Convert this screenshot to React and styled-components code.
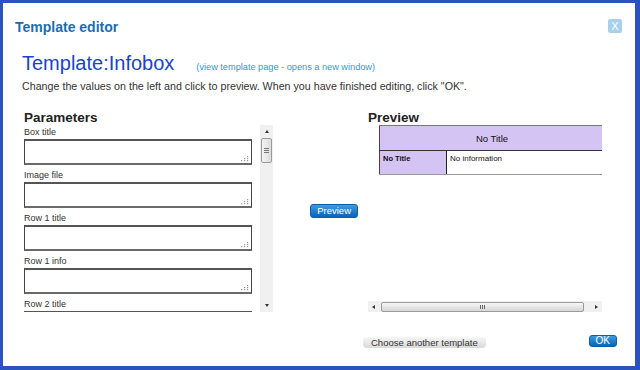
import styled, { createGlobalStyle } from 'styled-components';

const GlobalStyle = createGlobalStyle`
    html, body {
        margin: 0;
        padding: 0;
        background: #fff;
    }
    body {
        font-family: "Liberation Sans", Arial, sans-serif;
    }
`;

const Dialog = styled.div`
    box-sizing: border-box;
    width: 640px;
    height: 370px;
    border-style: solid;
    border-color: #2b53c0;
    border-width: 3px 5px 4px 3px;
    background: #fff;
    display: flex;
    flex-direction: column;
    overflow: hidden;
`;

const Header = styled.div`
    display: flex;
    justify-content: space-between;
    align-items: flex-start;
    padding: 16px 13px 0 12px;
`;

const Title = styled.h1`
    margin: 0;
    font-size: 14px;
    line-height: 17px;
    font-weight: bold;
    color: #1b6cb0;
`;

const CloseButton = styled.button`
    width: 14px;
    height: 14px;
    padding: 0;
    border: none;
    border-radius: 2px;
    background: #a9d0ea;
    color: #fff;
    font-family: "Liberation Sans", Arial, sans-serif;
    font-size: 11px;
    line-height: 14px;
    text-align: center;
`;

const Content = styled.div`
    padding-left: 19px;
    display: flex;
    flex-direction: column;
`;

const TemplateLine = styled.div`
    margin-top: 14px;
    display: flex;
    align-items: baseline;
    line-height: 27px;
`;

const TemplateName = styled.span`
    font-size: 20px;
    color: #1a44c8;
`;

const TemplateLink = styled.a`
    margin-left: 22px;
    font-size: 9.2px;
    color: #3297d6;
    text-decoration: none;
`;

const Hint = styled.p`
    margin: -1px 0 0;
    font-size: 10.7px;
    line-height: 13px;
    color: #333;
`;

const Main = styled.div`
    margin-top: 17px;
    padding-left: 2px;
    display: grid;
    grid-template-columns: 249px 95px 234px;
`;

const Column = styled.div`
    display: flex;
    flex-direction: column;
`;

const Heading = styled.h2`
    margin: 0;
    font-size: 13.5px;
    line-height: 15px;
    font-weight: bold;
    color: #222;
`;

const ParamBox = styled.div`
    display: flex;
    height: 187px;
`;

const ParamList = styled.div`
    width: 236px;
    padding-top: 2px;
    overflow: hidden;
`;

const Field = styled.div`
    margin-bottom: 5px;
`;

const Label = styled.label`
    display: block;
    margin-bottom: 1px;
    font-size: 9px;
    line-height: 11px;
    color: #333;
`;

const InputWrap = styled.div`
    position: relative;
    width: 228px;
    height: 26px;
`;

const TextArea = styled.textarea`
    box-sizing: border-box;
    display: block;
    width: 228px;
    height: 26px;
    margin: 0;
    padding: 2px;
    resize: none;
    border: 1px solid #444;
    border-top: 2px solid #555;
    border-bottom: 2px solid #6a6a6a;
    background: #fff;
    font-family: "Liberation Sans", Arial, sans-serif;
    font-size: 10px;
`;

const Grip = styled.svg`
    position: absolute;
    right: 3px;
    bottom: 3px;
    width: 8px;
    height: 7px;
`;

const ResizeGrip = () => (
    <Grip viewBox="0 0 8 7">
        {[
            [6, 1],
            [3, 3],
            [6, 3],
            [0, 5],
            [3, 5],
            [6, 5],
        ].map(([x, y]) => (
            <rect key={`${x}-${y}`} x={x} y={y} width="1.2" height="1.2" fill="#999" />
        ))}
    </Grip>
);

const VScroll = styled.div`
    width: 13px;
    background: #f0f0f0;
    display: flex;
    flex-direction: column;
    align-items: center;
`;

const Arrow = styled.span`
    width: 0;
    height: 0;
    margin: ${(p) => p.$margin};
    border-left: 2.5px solid transparent;
    border-right: 2.5px solid transparent;
    ${(p) => (p.$down ? 'border-top: 3px solid #333;' : 'border-bottom: 3px solid #333;')}
`;

const VThumb = styled.span`
    box-sizing: border-box;
    width: 11px;
    height: 25px;
    margin-top: 5px;
    border: 1px solid #9a9a9a;
    border-radius: 2px;
    background: linear-gradient(to right, #f4f4f4, #dcdcdc);
    display: flex;
    flex-direction: column;
    align-items: center;
    justify-content: center;
    gap: 1px;

    i {
        display: block;
        width: 5px;
        height: 1px;
        background: #777;
    }
`;

const Spacer = styled.span`
    flex: 1;
`;

const Middle = styled.div`
    display: flex;
    align-items: center;
    justify-content: flex-end;
    padding-right: 10px;
`;

const BlueButton = styled.button`
    box-sizing: border-box;
    height: ${(p) => p.$h || 14}px;
    padding: 0 ${(p) => p.$px || 6}px;
    border: 1px solid #0d5ea8;
    border-radius: 3px;
    background: linear-gradient(#3d9be0, #0a63b8);
    color: #fff;
    font-family: "Liberation Sans", Arial, sans-serif;
    font-size: ${(p) => p.$fs || 9.5}px;
    line-height: 1;
`;

const PreviewBox = styled.div`
    height: 187px;
    display: flex;
    flex-direction: column;
`;

const PreviewFrame = styled.div`
    flex: 1;
    overflow: hidden;
    padding-left: 11px;
`;

const Infobox = styled.table`
    width: 226px;
    border-collapse: collapse;
    font-family: "Liberation Sans", Arial, sans-serif;
    color: #111;
`;

const HeadCell = styled.th`
    height: 24px;
    padding: 0;
    background: #d4c4f4;
    border: 1px solid #777;
    border-bottom: 1px solid #333;
    border-left: 1px solid #444;
    font-size: 9.5px;
    font-weight: normal;
    text-align: center;
`;

const Cell = styled.td`
    box-sizing: border-box;
    height: 24px;
    padding: 3px 3px 0;
    vertical-align: top;
    font-size: ${(p) => (p.$head ? 7.5 : 8)}px;
    line-height: 10px;
    font-weight: ${(p) => (p.$head ? 'bold' : 'normal')};
    background: ${(p) => (p.$head ? '#d4c4f4' : '#fff')};
    width: ${(p) => (p.$head ? '67px' : 'auto')};
    border-bottom: 1px solid #999;
    border-left: 1px solid ${(p) => (p.$head ? '#444' : '#222')};
`;

const HScroll = styled.div`
    height: 11px;
    background: #f0f0f0;
    display: flex;
    align-items: center;
    padding: 0 4px;
`;

const HArrow = styled.span`
    width: 0;
    height: 0;
    border-top: 2.5px solid transparent;
    border-bottom: 2.5px solid transparent;
    ${(p) => (p.$right ? 'border-left: 3px solid #333;' : 'border-right: 3px solid #333;')}
`;

const HThumb = styled.span`
    box-sizing: border-box;
    flex: 1;
    height: 10px;
    margin: 0 11px 0 6px;
    border: 1px solid #9a9a9a;
    border-radius: 2px;
    background: linear-gradient(#f6f6f6, #d6d6d6);
    display: flex;
    justify-content: center;
    align-items: center;
    gap: 1px;

    i {
        display: block;
        width: 1px;
        height: 4px;
        background: #666;
    }
`;

const Footer = styled.div`
    margin-top: 23px;
    padding: 0 18px 0 341px;
    display: flex;
    justify-content: space-between;
    align-items: flex-start;
`;

const GrayButton = styled.button`
    box-sizing: border-box;
    height: 11px;
    margin-top: 2px;
    padding: 0 8px;
    border: none;
    border-radius: 4px;
    background: linear-gradient(#f6f6f6, #d9d9d9);
    color: #333;
    font-family: "Liberation Sans", Arial, sans-serif;
    font-size: 9.5px;
    line-height: 11px;
`;

const params = ['Box title', 'Image file', 'Row 1 title', 'Row 1 info', 'Row 2 title'];

export default function App() {
    return (
        <>
            <GlobalStyle />
            <Dialog>
                <Header>
                    <Title>Template editor</Title>
                    <CloseButton>X</CloseButton>
                </Header>
                <Content>
                    <TemplateLine>
                        <TemplateName>Template:Infobox</TemplateName>
                        <TemplateLink href="#">(view template page - opens a new window)</TemplateLink>
                    </TemplateLine>
                    <Hint>
                        Change the values on the left and click to preview. When you have finished editing, click "OK".
                    </Hint>
                    <Main>
                        <Column>
                            <Heading>Parameters</Heading>
                            <ParamBox>
                                <ParamList>
                                    {params.map((p) => (
                                        <Field key={p}>
                                            <Label>{p}</Label>
                                            <InputWrap>
                                                <TextArea />
                                                <ResizeGrip />
                                            </InputWrap>
                                        </Field>
                                    ))}
                                </ParamList>
                                <VScroll>
                                    <Arrow $margin="5px 0 0" />
                                    <VThumb>
                                        <i />
                                        <i />
                                        <i />
                                    </VThumb>
                                    <Spacer />
                                    <Arrow $down $margin="0 0 5px" />
                                </VScroll>
                            </ParamBox>
                        </Column>
                        <Middle>
                            <BlueButton>Preview</BlueButton>
                        </Middle>
                        <Column>
                            <Heading>Preview</Heading>
                            <PreviewBox>
                                <PreviewFrame>
                                    <Infobox>
                                        <tbody>
                                            <tr>
                                                <HeadCell colSpan={2}>No Title</HeadCell>
                                            </tr>
                                            <tr>
                                                <Cell $head>No Title</Cell>
                                                <Cell>No information</Cell>
                                            </tr>
                                        </tbody>
                                    </Infobox>
                                </PreviewFrame>
                                <HScroll>
                                    <HArrow />
                                    <HThumb>
                                        <i />
                                        <i />
                                        <i />
                                    </HThumb>
                                    <HArrow $right />
                                </HScroll>
                            </PreviewBox>
                        </Column>
                    </Main>
                    <Footer>
                        <GrayButton>Choose another template</GrayButton>
                        <BlueButton $h={12} $px={6} $fs={10}>OK</BlueButton>
                    </Footer>
                </Content>
            </Dialog>
        </>
    );
}
